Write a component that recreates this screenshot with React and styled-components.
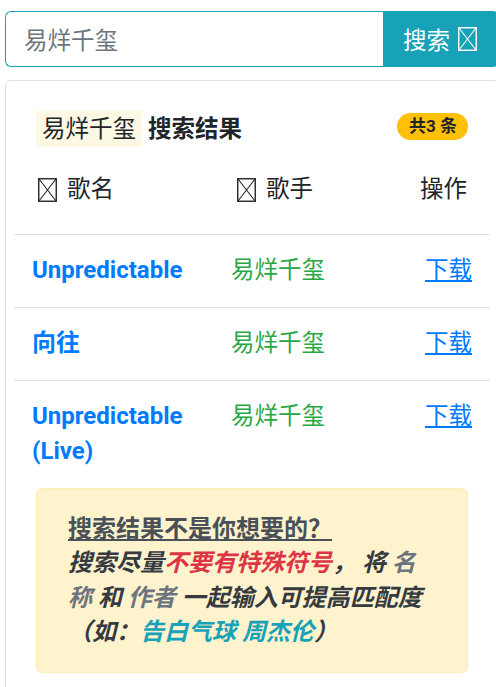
import React from 'react';
import styled, { createGlobalStyle } from 'styled-components';

const GlobalStyle = createGlobalStyle`
  html, body {
    margin: 0;
    padding: 0;
    overflow: hidden;
    background: #fff;
  }
  body {
    font-family: Roboto, 'Noto Sans CJK SC', sans-serif;
    font-size: 23.5px;
    color: #212529;
  }
`;

const Page = styled.div`
  width: 494px;
  padding: 11px 0 0 5px;
`;

const SearchGroup = styled.div`
  display: flex;
  height: 56px;
`;

const SearchInput = styled.input`
  flex: 1;
  min-width: 0;
  box-sizing: border-box;
  height: 56px;
  border: 1px solid #17a2b8;
  border-right: none;
  border-radius: 6px 0 0 6px;
  padding: 0 18px;
  font: inherit;
  color: #6c757d;
  outline: none;
`;

const SearchButton = styled.button`
  width: 116px;
  flex: none;
  border: none;
  border-radius: 0 6px 6px 0;
  background: #17a2b8;
  color: #fff;
  font: inherit;
  display: flex;
  align-items: center;
  padding: 0 0 0 20px;
  gap: 8px;
  cursor: pointer;
`;

const Tofu = ({ color = '#212529' }) => (
  <svg width="19" height="24" viewBox="0 0 19 24" style={{ flex: 'none' }}>
    <rect x="0.75" y="0.75" width="17.5" height="22.5" fill="none" stroke={color} strokeWidth="1.4" />
    <path d="M1 1 L18 23 M18 1 L1 23" stroke={color} strokeWidth="1.1" />
  </svg>
);

const Card = styled.div`
  margin-top: 13px;
  border: 1px solid rgba(0, 0, 0, 0.125);
  border-radius: 6px;
  padding: 30px 30px 14px;
`;

const TitleRow = styled.div`
  display: flex;
  align-items: center;
  justify-content: space-between;
  height: 36px;
`;

const Title = styled.h5`
  margin: 0;
  font-size: 23.5px;
  font-weight: 700;
  line-height: 36px;
`;

const Mark = styled.span`
  background: #fcf8e3;
  font-weight: 400;
  padding: 0 6px;
  margin-right: 6px;
  display: inline-block;
`;

const Badge = styled.span`
  background: #ffc107;
  color: #212529;
  font-size: 17px;
  font-weight: 700;
  line-height: 27px;
  padding: 0 11px 0 12px;
  border-radius: 14px;
  margin-top: -6px;
`;

const Table = styled.div`
  margin: 0 -22px;
`;

const Row = styled.div`
  display: grid;
  grid-template-columns: 199px 1fr auto;
  border-top: ${p => (p.$head ? 'none' : '1px solid #dee2e6')};
  line-height: 35px;
`;

const Cell = styled.div`
  padding: ${p => (p.$head ? '25px 18px 22px' : '18.5px 18px')};
  padding-right: ${p => (p.$head && p.$right ? '23px' : '18px')};
  text-align: ${p => (p.$right ? 'right' : 'left')};
`;

const HeadLabel = styled.span`
  display: inline-flex;
  align-items: center;
  gap: 10px;
  padding-left: 6px;
`;

const SongName = styled.span`
  color: #007bff;
  font-weight: 700;
  font-size: 24px;
`;

const Singer = styled.span`
  color: #28a745;
`;

const DownloadLink = styled.a`
  color: #007bff;
  text-decoration: underline;
`;

const Alert = styled.div`
  background: #fff3cd;
  border: 1px solid #ffeeba;
  border-radius: 6px;
  padding: 23px 31px 22px;
  font-size: 24px;
  line-height: 34.5px;
  margin-bottom: 14px;
`;

const AlertHead = styled.div`
  color: #495057;
  font-weight: 700;
  text-decoration: underline;
`;

const AlertText = styled.div`
  color: #343a40;
  font-weight: 700;
  font-style: italic;
  padding-right: 8px;
`;

const Tone = styled.span`
  color: ${p => p.$color};
`;

const songs = [
  { name: 'Unpredictable', singer: '易烊千玺' },
  { name: '向往', singer: '易烊千玺' },
  { name: 'Unpredictable (Live)', singer: '易烊千玺' },
];

export default function App() {
  return (
    <Page>
      <GlobalStyle />
      <SearchGroup>
        <SearchInput defaultValue="易烊千玺" />
        <SearchButton>
          搜索 <Tofu color="#fff" />
        </SearchButton>
      </SearchGroup>
      <Card>
        <TitleRow>
          <Title>
            <Mark>易烊千玺</Mark>搜索结果
          </Title>
          <Badge>共3 条</Badge>
        </TitleRow>
        <Table>
          <Row $head>
            <Cell $head>
              <HeadLabel>
                <Tofu /> 歌名
              </HeadLabel>
            </Cell>
            <Cell $head>
              <HeadLabel>
                <Tofu /> 歌手
              </HeadLabel>
            </Cell>
            <Cell $head $right>操作</Cell>
          </Row>
          {songs.map((s, i) => (
            <Row key={i}>
              <Cell>
                <SongName>{s.name}</SongName>
              </Cell>
              <Cell>
                <Singer>{s.singer}</Singer>
              </Cell>
              <Cell $right>
                <DownloadLink href="#">下载</DownloadLink>
              </Cell>
            </Row>
          ))}
        </Table>
        <Alert>
          <AlertHead>搜索结果不是你想要的？ </AlertHead>
          <AlertText>
            搜索尽量<Tone $color="#dc3545">不要有特殊符号</Tone>， 将 <Tone $color="#6c757d">名称</Tone> 和{' '}
            <Tone $color="#6c757d">作者</Tone> 一起输入可提高匹配度（如：
            <Tone $color="#17a2b8">告白气球 周杰伦</Tone>）
          </AlertText>
        </Alert>
      </Card>
    </Page>
  );
}
